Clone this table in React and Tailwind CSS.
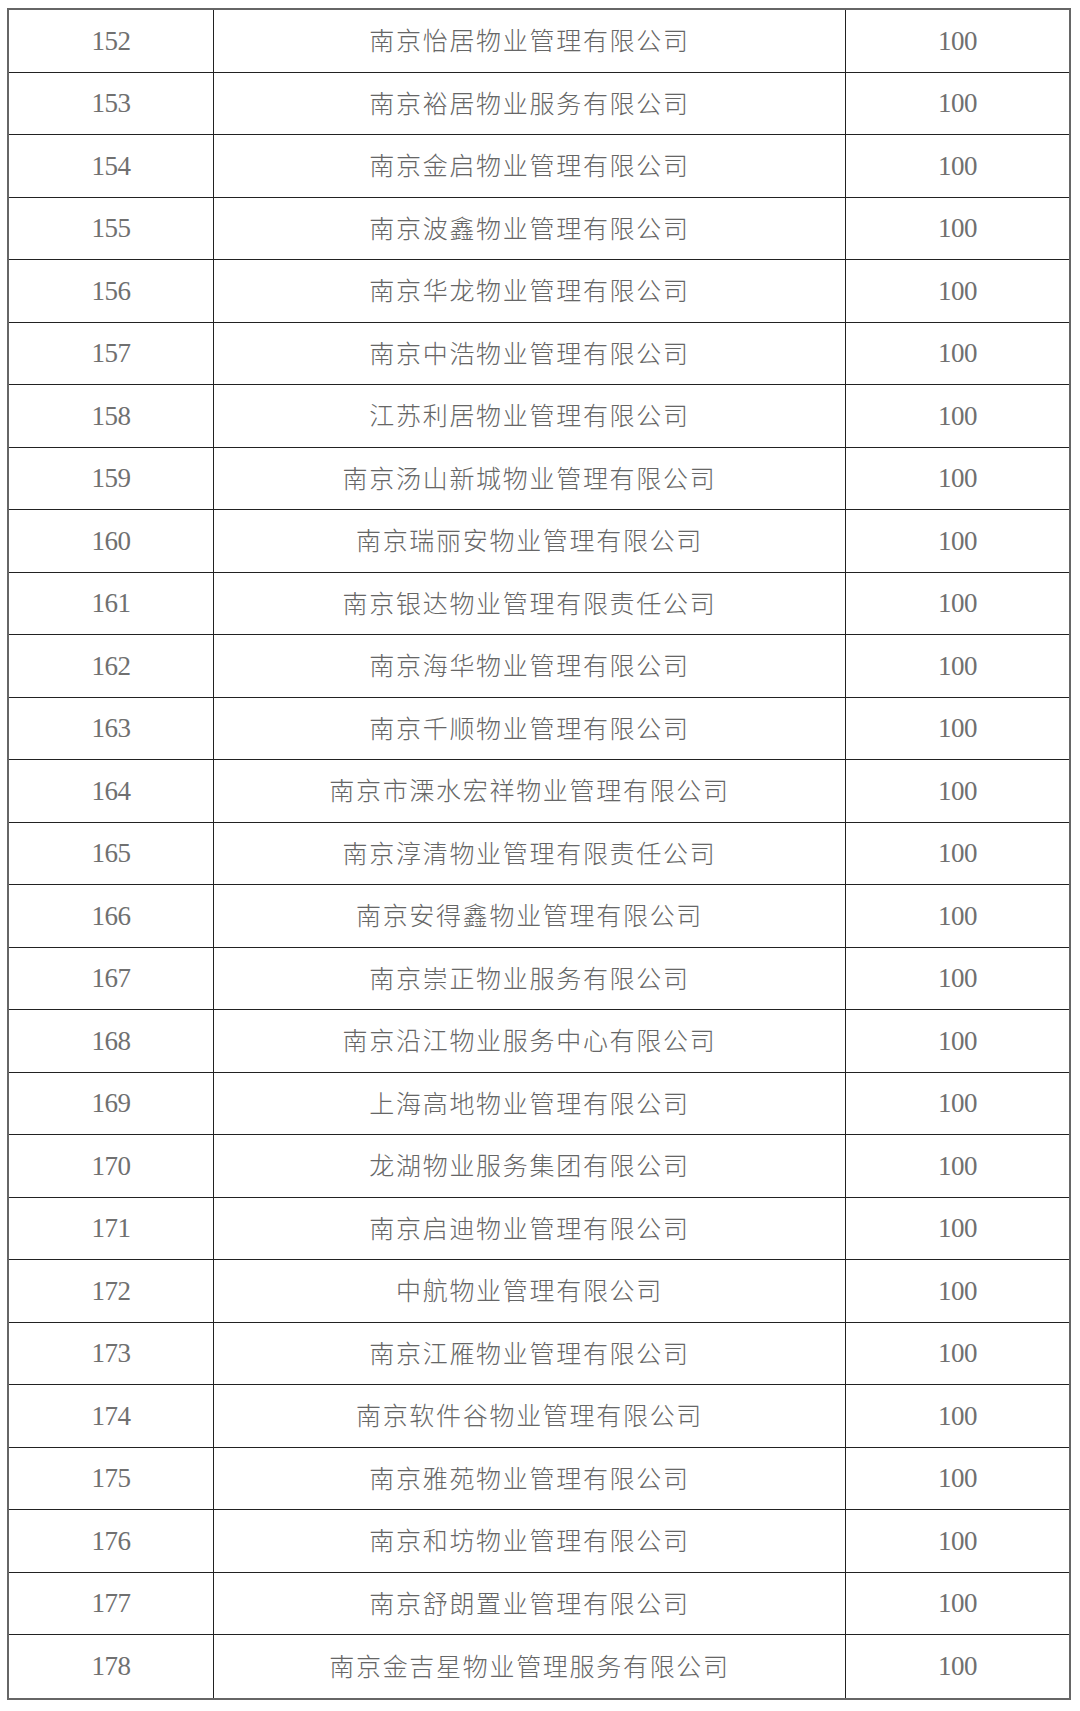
import React from 'react';

const rows = [
  [152, '南京怡居物业管理有限公司'],
  [153, '南京裕居物业服务有限公司'],
  [154, '南京金启物业管理有限公司'],
  [155, '南京波鑫物业管理有限公司'],
  [156, '南京华龙物业管理有限公司'],
  [157, '南京中浩物业管理有限公司'],
  [158, '江苏利居物业管理有限公司'],
  [159, '南京汤山新城物业管理有限公司'],
  [160, '南京瑞丽安物业管理有限公司'],
  [161, '南京银达物业管理有限责任公司'],
  [162, '南京海华物业管理有限公司'],
  [163, '南京千顺物业管理有限公司'],
  [164, '南京市溧水宏祥物业管理有限公司'],
  [165, '南京淳清物业管理有限责任公司'],
  [166, '南京安得鑫物业管理有限公司'],
  [167, '南京崇正物业服务有限公司'],
  [168, '南京沿江物业服务中心有限公司'],
  [169, '上海高地物业管理有限公司'],
  [170, '龙湖物业服务集团有限公司'],
  [171, '南京启迪物业管理有限公司'],
  [172, '中航物业管理有限公司'],
  [173, '南京江雁物业管理有限公司'],
  [174, '南京软件谷物业管理有限公司'],
  [175, '南京雅苑物业管理有限公司'],
  [176, '南京和坊物业管理有限公司'],
  [177, '南京舒朗置业管理有限公司'],
  [178, '南京金吉星物业管理服务有限公司'],
];

const num = "font-['Liberation_Serif',serif] text-[27px] tracking-[-0.5px] text-[#707070]";
const cjk = "font-['Noto_Sans_CJK_SC',sans-serif] font-light text-[25px] tracking-[1.7px] text-[#666] pb-[2px]";

export default function App() {
  return (
    <div className="bg-white w-[1080px] h-[1711px] pt-[8px] pl-[7px]">
      <div className="w-[1064px] border-2 border-[#666]">
        {rows.map(([n, name], i) => (
          <div
            key={n}
            className={`flex h-[62.5px] ${i < rows.length - 1 ? 'border-b border-[#222]' : ''}`}
          >
            <div className={`w-[205px] border-r border-[#222] flex items-center justify-center ${num}`}>
              {n}
            </div>
            <div className={`w-[632px] border-r border-[#222] flex items-center justify-center ${cjk}`}>
              {name}
            </div>
            <div className={`flex-1 flex items-center justify-center ${num}`}>100</div>
          </div>
        ))}
      </div>
    </div>
  );
}
